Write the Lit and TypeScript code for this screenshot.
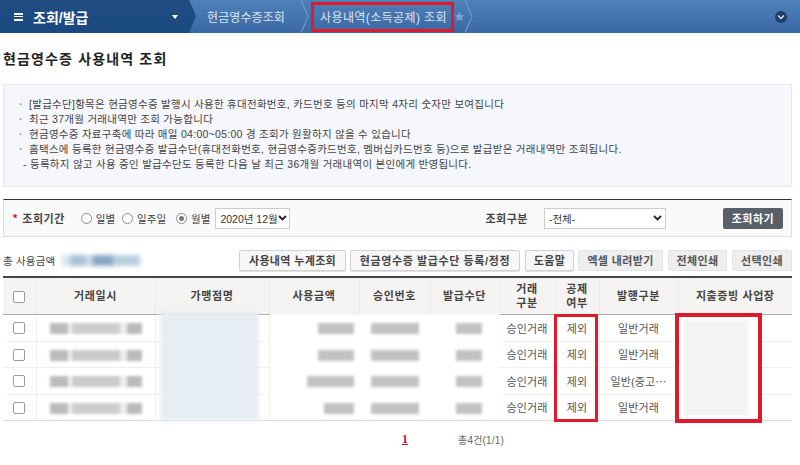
import { LitElement, html, css } from "lit";
import { customElement } from "lit/decorators.js";

const rows = [
  { amt: 36, issue: "일반거래" },
  { amt: 36, issue: "일반거래" },
  { amt: 47, issue: "일반(중고⋯" },
  { amt: 30, issue: "일반거래" },
];
const notes = [
  "[발급수단]항목은 현금영수증 발행시 사용한 휴대전화번호, 카드번호 등의 마지막 4자리 숫자만 보여집니다",
  "최근 37개월 거래내역만 조회 가능합니다",
  "현금영수증 자료구축에 따라 매일 04:00~05:00 경 조회가 원활하지 않을 수 있습니다",
  "홈택스에 등록한 현금영수증 발급수단(휴대전화번호, 현금영수증카드번호, 멤버십카드번호 등)으로 발급받은 거래내역만 조회됩니다.",
];
const chev = html`<svg class="chev" viewBox="0 0 10 33"><path d="M0 0 L7 16.5 L0 33" fill="none" stroke="#7ea2cc"/></svg>`;
const arrow = html`<svg width="9" height="6" viewBox="0 0 9 6"><path d="M1 1 L4.5 4.5 L8 1" fill="none" stroke="#222" stroke-width="1.8"/></svg>`;

@customElement("app-root")
export class AppRoot extends LitElement {
  static styles = css`
    :host { display: block; width: 800px; height: 465px; overflow: hidden; background: #fff; position: relative;
      font-family: "Liberation Sans", "Noto Sans CJK KR", sans-serif; font-size: 11px; color: #333; }
    * { box-sizing: border-box; }
    .nav { display: flex; height: 33px; background: linear-gradient(#4f80b8, #3b68a4); color: #dbe6f3; position: relative; }
    .seg { display: flex; align-items: center; position: relative; height: 33px; }
    .home { width: 196px; padding-left: 14px; color: #fff; font-size: 14px; font-weight: 700;
      background: linear-gradient(#1f4d83, #1b4a80);
      clip-path: polygon(0 0, 189px 0, 196px 16px, 189px 33px, 0 33px); }
    .burger { width: 9px; height: 8px; margin-right: 10px; border-top: 2px solid #fff; border-bottom: 2px solid #fff; position: relative; flex: none; }
    .burger::after { content: ""; position: absolute; left: 0; right: 0; top: 1px; height: 1px; background: #fff; }
    .caret { margin-left: auto; margin-right: 18px; width: 0; height: 0; border: 3px solid transparent; border-top: 4px solid #fff; border-bottom: 0; }
    .s2 { width: 115px; padding-left: 11px; font-size: 12px; letter-spacing: 0.1px; }
    .s3 { width: 164px; padding-left: 9px; font-size: 12px; white-space: nowrap; letter-spacing: 0.4px; }
    .chev { position: absolute; right: 0; top: 0; width: 10px; height: 33px; }
    .star { margin-left: 7px; display: block; }
    .toggle { position: absolute; right: 13px; top: 11px; width: 12px; height: 12px; border-radius: 50%; background: #1e3f68;
      display: flex; align-items: center; justify-content: center; }
    h1 { margin: 0; padding: 17px 0 0 3px; height: 51px; font-size: 14px; line-height: 18px; font-weight: 700; color: #222; letter-spacing: 1.15px; }
    .info { margin: 0 8px 0 3px; height: 103px; background: #f5f7fc; border: 1px solid #e6e8ec; padding: 12px 0 0 15px; font-size: 10.5px; line-height: 15px; letter-spacing: 0.28px; color: #444; }
    .info div { white-space: nowrap; }
    .info .b::before { content: "·"; color: #7f9cc0; font-weight: 700; display: inline-block; width: 10px; }
    .info .d { padding-left: 4px; }
    .search { margin: 12px 8px 0 3px; height: 38px; border: 1px solid #ddd; border-top: 1px solid #333; background: #fafafa;
      display: flex; align-items: center; padding-left: 9px; }
    .req { color: #d0112b; font-weight: 700; margin-right: 5px; font-size: 11px; }
    .lbl { font-weight: 700; color: #444; letter-spacing: 0.5px; font-size: 11px; white-space: nowrap; }
    .radio { display: flex; align-items: center; gap: 4px; font-size: 10.5px; color: #444; white-space: nowrap; }
    .dot { width: 11px; height: 11px; border-radius: 50%; border: 1px solid #8a8a8a; background: #fff; position: relative; }
    .dot.on::after { content: ""; position: absolute; inset: 2px; border-radius: 50%; background: #777; }
    .r-a { margin-left: 16px; }
    .r-b { margin-left: 7px; }
    .r-c { margin-left: 10px; }
    .sel { display: flex; align-items: center; height: 21px; border: 1px solid #ccc; background: #fff; font-size: 10.5px; color: #333; padding-left: 4px; white-space: nowrap; }
    .sel svg { margin-left: auto; margin-right: 3px; flex: none; }
    .sel-a { width: 75px; margin-left: 5px; }
    .lbl-b { margin-left: 195px; }
    .sel-b { width: 122px; margin-left: 16px; }
    .go { width: 60px; height: 21px; margin-left: 57px; border-radius: 2px; background: #5a6068; color: #fff; font-weight: 700; font-size: 11px; display: flex; align-items: center; justify-content: center; letter-spacing: 0.5px; }
    .tools { margin: 12px 8px 0 3px; height: 22px; display: flex; align-items: center; }
    .total { font-size: 10.5px; color: #444; letter-spacing: 0.2px; }
    .bluramt { width: 78px; height: 11px; margin-left: 7px; filter: blur(2px);
      background: linear-gradient(90deg, #d8e6f0 0 10%, #a8c0d6 10% 30%, #c4d6e4 30% 40%, #88a6c4 40% 65%, #b8cfdf 65% 100%); }
    .btns { margin-left: auto; display: flex; }
    .btn { height: 21px; display: flex; align-items: center; justify-content: center; border: 1px solid #d2d2d2; border-radius: 2px; background: #f7f7f7; font-weight: 700; font-size: 11px; color: #444; letter-spacing: 0.35px; white-space: nowrap; box-shadow: 0 1px 1px #ddd; }
    .btn.flat { background: #eeeeee; border-color: #e4e4e4; color: #555; box-shadow: none; }
    .w1 { width: 107px; }
    .w2 { width: 170px; margin-left: 4px; letter-spacing: 0.6px; }
    .w3 { width: 49px; margin-left: 5px; }
    .w4 { width: 85px; margin-left: 4px; }
    .w5 { width: 59px; margin-left: 5px; }
    .w6 { width: 60px; margin-left: 5px; }
    .grid-wrap { position: relative; margin: 5px 8px 0 3px; }
    table { border-collapse: collapse; table-layout: fixed; width: 789px; font-size: 11px; }
    thead tr { border-top: 2px solid #444; }
    th { height: 37.5px; background: #f6f4f2; font-weight: 700; color: #444; border-right: 1px solid #eeeae6; border-bottom: 1px solid #aaa; letter-spacing: 0.6px; line-height: 14px; padding: 0; }
    th.soft { border-bottom-color: #f6f4f2; }
    th:last-child { border-right: 0; }
    td { height: 26.5px; padding: 0; text-align: center; border-bottom: 1px solid #efefef; border-right: 1px solid #efefef; color: #555; white-space: nowrap; letter-spacing: 0.15px; }
    td:last-child { border-right: 0; }
    tbody tr:last-child td { border-bottom: 1px solid #ddd; }
    td.clean { border-color: #fff; }
    td.amt { text-align: right; padding-right: 5px; }
    td.method { padding-left: 9px; }
    td.mer { text-align: right; padding-right: 11px; color: #888; }
    .box { display: inline-block; width: 12px; height: 12px; border: 1px solid #9a9a9a; border-radius: 2px; background: #fff; vertical-align: middle; }
    .smear { display: inline-block; height: 11px; vertical-align: middle; filter: blur(1.5px); background: #c2c2c2; }
    .date { width: 92px; background: linear-gradient(90deg, #bbb 0 20%, #eee 20% 24%, #ccc 24% 76%, #eee 76% 84%, #bbb 84% 100%); }
    .patch { position: absolute; left: 157px; top: 35px; width: 99px; height: 110px; background: #e6edf3; filter: blur(2.5px); }
    .bizwrap { position: absolute; left: 678px; top: 316px; width: 82px; height: 105px; background: #fff; overflow: hidden; }
    .biz { width: 64px; height: 95px; margin: 5px 0 0 6px; filter: blur(1.5px);
      background: repeating-linear-gradient(#efefef 0 2px, #f6f6f6 2px 4px); }
    .red { position: absolute; border: 3px solid #e01a2b; pointer-events: none; }
    .r1 { left: 311px; top: 2px; width: 143px; height: 30px; }
    .r2 { left: 554px; top: 314px; width: 44px; height: 108px; }
    .r3 { left: 675px; top: 313px; width: 87px; height: 110px; border-width: 4px; }
    .pager { margin: 0 8px 0 3px; height: 36px; display: flex; align-items: center; }
    .pg1 { margin-left: 399px; color: #c8102e; font-weight: 700; font-family: "Liberation Serif", serif; font-size: 12px; text-decoration: underline; }
    .cnt { margin-left: 50px; font-size: 10px; color: #666; letter-spacing: 0.2px; }
  `;

  render() {
    return html`
      <div class="nav">
        <div class="seg home"><span class="burger"></span>조회/발급<span class="caret"></span></div>
        <div class="seg s2">현금영수증조회 ${chev}</div>
        <div class="seg s3">사용내역(소득공제) 조회<svg class="star" width="11" height="11" viewBox="0 0 10 10"><path d="M5 0.5 L6.3 3.6 L9.7 3.9 L7.1 6.1 L7.9 9.4 L5 7.6 L2.1 9.4 L2.9 6.1 L0.3 3.9 L3.7 3.6 Z" fill="#7d9fc8"/></svg>${chev}</div>
        <div class="toggle"><svg width="8" height="6" viewBox="0 0 8 6"><path d="M1 1.5 L4 4.5 L7 1.5" fill="none" stroke="#dfe8f2" stroke-width="1.3"/></svg></div>
      </div>
      <h1>현금영수증 사용내역 조회</h1>
      <div class="info">
        ${notes.map((n) => html`<div class="b">${n}</div>`)}
        <div class="d">- 등록하지 않고 사용 중인 발급수단도 등록한 다음 날 최근 36개월 거래내역이 본인에게 반영됩니다.</div>
      </div>
      <div class="search">
        <span class="req">*</span><span class="lbl">조회기간</span>
        <span class="radio r-a"><span class="dot"></span>일별</span>
        <span class="radio r-b"><span class="dot"></span>일주일</span>
        <span class="radio r-c"><span class="dot on"></span>월별</span>
        <span class="sel sel-a">2020년 12월${arrow}</span>
        <span class="lbl lbl-b">조회구분</span>
        <span class="sel sel-b">-전체-${arrow}</span>
        <span class="go">조회하기</span>
      </div>
      <div class="tools">
        <span class="total">총 사용금액</span><span class="bluramt"></span>
        <div class="btns">
          <span class="btn w1">사용내역 누계조회</span>
          <span class="btn w2">현금영수증 발급수단 등록/정정</span>
          <span class="btn w3">도움말</span>
          <span class="btn flat w4">엑셀 내려받기</span>
          <span class="btn flat w5">전체인쇄</span>
          <span class="btn flat w6">선택인쇄</span>
        </div>
      </div>
      <div class="grid-wrap">
        <table>
          <colgroup>
            <col style="width:33px"/><col style="width:119px"/><col style="width:114px"/><col style="width:90px"/>
            <col style="width:71px"/><col style="width:69px"/><col style="width:56px"/><col style="width:44px"/>
            <col style="width:79px"/><col style="width:114px"/>
          </colgroup>
          <thead><tr>
            <th><span class="box"></span></th><th>거래일시</th><th>가맹점명</th><th class="soft">사용금액</th><th class="soft">승인번호</th><th class="soft">발급수단</th>
            <th>거래<br/>구분</th><th>공제<br/>여부</th><th>발행구분</th><th>지출증빙 사업장</th>
          </tr></thead>
          <tbody>
            ${rows.map((r) => html`<tr>
              <td><span class="box"></span></td>
              <td><span class="smear date"></span></td>
              <td class="mer">·</td>
              <td class="clean amt"><span class="smear" style="width:${r.amt}px"></span></td>
              <td class="clean"><span class="smear" style="width:48px"></span></td>
              <td class="clean method"><span class="smear" style="width:26px"></span></td>
              <td>승인거래</td><td>제외</td><td>${r.issue}</td><td></td>
            </tr>`)}
          </tbody>
        </table>
        <div class="patch"></div>
      </div>
      <div class="pager"><span class="pg1">1</span><span class="cnt">총4건(1/1)</span></div>
      <div class="bizwrap"><div class="biz"></div></div>
      <div class="red r1"></div><div class="red r2"></div><div class="red r3"></div>
    `;
  }
}
